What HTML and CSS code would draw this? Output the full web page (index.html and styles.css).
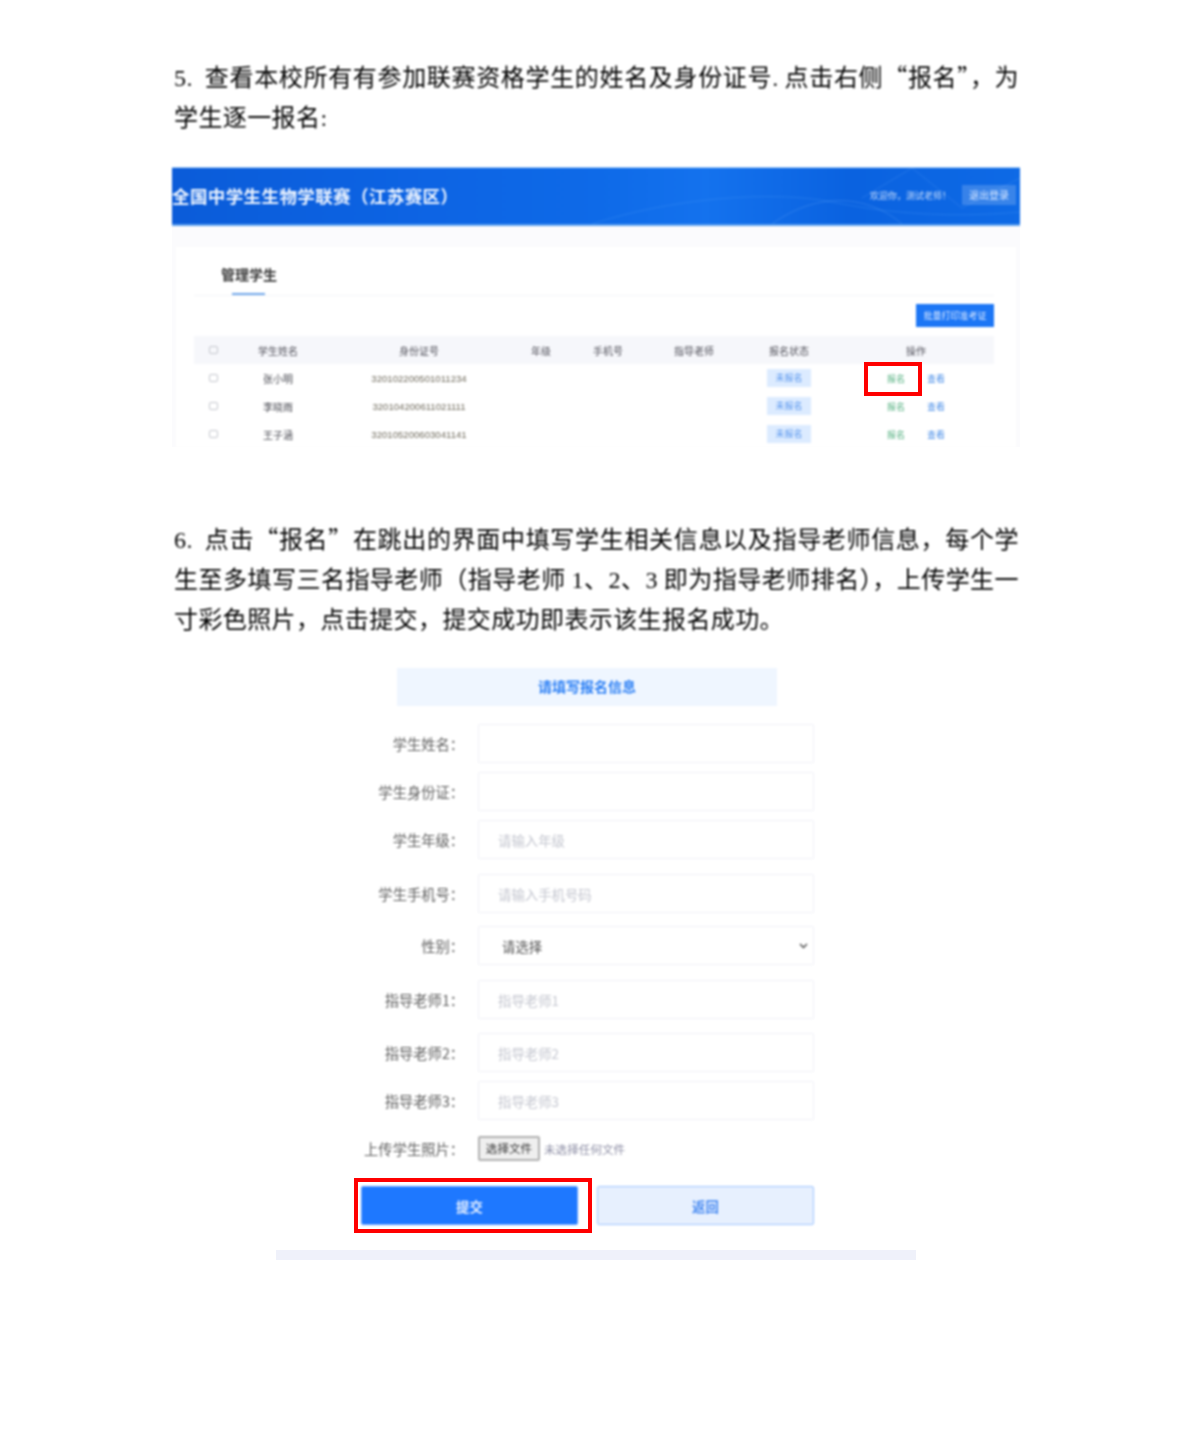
FILE: index.html
```html
<!DOCTYPE html>
<html lang="zh-CN">
<head>
<meta charset="utf-8">
<title>报名说明</title>
<link rel="stylesheet" href="styles.css">
</head>
<body>
<main class="doc">
  <div class="para">
    <span class="line full"><span class="num">5.</span> 查看本校所有有参加联赛资格学生的姓名及身份证号<span class="dot">.</span> 点击右侧“报名”，为</span>
    <span class="line">学生逐一报名<span class="dot">:</span></span>
  </div>

  <section class="shot">
    <header class="shot-head">
      <svg class="waves" viewBox="0 0 848 56" preserveAspectRatio="none" aria-hidden="true">
        <path d="M420 56C500 30 600 22 660 34S780 50 848 44" fill="none" stroke="#4d9bf5" stroke-opacity=".3"/>
        <path d="M600 56C650 20 700 30 730 56" fill="none" stroke="#7ab6fa" stroke-opacity=".25"/>
        <path d="M690 30L740 0L790 40L848 10" fill="none" stroke="#7ab6fa" stroke-opacity=".2"/>
      </svg>
      <h2 class="shot-title">全国中学生生物学联赛（江苏赛区）</h2>
      <div class="shot-user">
        <span class="welcome">欢迎你，测试老师！</span>
        <span class="logout">退出登录</span>
      </div>
    </header>
    <div class="shot-body">
      <div class="card">
        <div class="tabbar">
          <div class="tab">
            <span class="tab-label">管理学生</span>
            <span class="tab-line"></span>
          </div>
        </div>
        <div class="toolbar"><span class="print-btn">批量打印准考证</span></div>
        <div class="trow thead">
          <span class="cell"><i class="check"></i></span>
          <span class="cell">学生姓名</span>
          <span class="cell">身份证号</span>
          <span class="cell">年级</span>
          <span class="cell">手机号</span>
          <span class="cell">指导老师</span>
          <span class="cell">报名状态</span>
          <span class="cell">操作</span>
        </div>
        <div class="trow">
          <span class="cell"><i class="check"></i></span>
          <span class="cell redact">张小明</span>
          <span class="cell redact id">320102200501011234</span>
          <span class="cell"></span><span class="cell"></span><span class="cell"></span>
          <span class="cell"><span class="tag">未报名</span></span>
          <span class="cell actions"><span class="act-green">报名</span><span class="act-blue">查看</span></span>
        </div>
        <div class="trow">
          <span class="cell"><i class="check"></i></span>
          <span class="cell redact">李晓雨</span>
          <span class="cell redact id">320104200611021111</span>
          <span class="cell"></span><span class="cell"></span><span class="cell"></span>
          <span class="cell"><span class="tag">未报名</span></span>
          <span class="cell actions"><span class="act-green">报名</span><span class="act-blue">查看</span></span>
        </div>
        <div class="trow">
          <span class="cell"><i class="check"></i></span>
          <span class="cell redact">王子涵</span>
          <span class="cell redact id">320105200603041141</span>
          <span class="cell"></span><span class="cell"></span><span class="cell"></span>
          <span class="cell"><span class="tag">未报名</span></span>
          <span class="cell actions"><span class="act-green">报名</span><span class="act-blue">查看</span></span>
        </div>
      </div>
    </div>
    <div class="mark mark-signup"></div>
  </section>

  <div class="para para-two">
    <span class="line full"><span class="num">6.</span> 点击“报名”在跳出的界面中填写学生相关信息以及指导老师信息，每个学</span>
    <span class="line full">生至多填写三名指导老师（指导老师 <span class="dot">1</span>、<span class="dot">2</span>、<span class="dot">3</span> 即为指导老师排名），上传学生一</span>
    <span class="line">寸彩色照片，点击提交，提交成功即表示该生报名成功。</span>
  </div>

  <form class="form">
    <div class="form-title">请填写报名信息</div>
    <div class="frow"><label class="flabel">学生姓名：</label><input class="control" type="text"></div>
    <div class="frow"><label class="flabel">学生身份证：</label><input class="control" type="text"></div>
    <div class="frow"><label class="flabel">学生年级：</label><input class="control" type="text" placeholder="请输入年级"></div>
    <div class="frow wide"><label class="flabel">学生手机号：</label><input class="control" type="text" placeholder="请输入手机号码"></div>
    <div class="frow mid"><label class="flabel">性别：</label><select class="control select"><option>请选择</option></select></div>
    <div class="frow wide"><label class="flabel">指导老师1：</label><input class="control" type="text" placeholder="指导老师1"></div>
    <div class="frow mid2"><label class="flabel">指导老师2：</label><input class="control" type="text" placeholder="指导老师2"></div>
    <div class="frow"><label class="flabel">指导老师3：</label><input class="control" type="text" placeholder="指导老师3"></div>
    <div class="frow file-row">
      <label class="flabel">上传学生照片：</label>
      <span class="file-btn">选择文件</span>
      <span class="file-note">未选择任何文件</span>
    </div>
    <div class="form-actions">
      <button class="btn btn-primary" type="button">提交</button>
      <button class="btn btn-plain" type="button">返回</button>
    </div>
  </form>
  <div class="submit-mark-anchor"><div class="mark mark-submit"></div></div>
  <div class="footer-bar"></div>
</main>
</body>
</html>
```

FILE: styles.css
```css
* { box-sizing: border-box; }
html, body { margin: 0; padding: 0; background: #fff; }
body {
  font-family: "Noto Sans CJK SC", "Noto Sans", sans-serif;
  color: #000;
}
.doc { width: 848px; margin-left: 172px; padding-top: 56px; }

.para { font-size: 24px; letter-spacing: .4px; font-weight: 400; filter: blur(.8px); color: #000; }
.para-two { margin-top: 71px; }
.line { display: block; height: 40px; line-height: 40px; white-space: nowrap; padding-left: 2px; }
.line.full { text-align: justify; text-align-last: justify; white-space: normal; padding-right: 1px; }
.num, .dot { font-family: "Liberation Serif", serif; line-height: 1; }
.num { margin-right: 6px; }

/* screenshot 1 */
.shot { position: relative; margin-top: 31px; height: 280px; }
.shot-head {
  position: relative;
  height: 59px;
  display: flex;
  align-items: center;
  justify-content: space-between;
  padding: 0 4px 2px 0;
  border-top: 1px solid #a6cdf7;
  border-bottom: 2px solid #5b9fee;
  background: linear-gradient(90deg, #0b5cd9 0%, #0d64e4 30%, #0e6ae8 50%, #1472ee 63%, #0a62e0 80%, #0e6ae6 100%);
  filter: blur(.8px);
  overflow: hidden;
}
.waves { position: absolute; inset: 0; width: 100%; height: 100%; }
.shot-title { position: relative; margin: 2px 0 0; font-size: 17.5px; line-height: 24px; letter-spacing: .4px; font-weight: 700; color: #eef5ff; white-space: nowrap; }
.shot-user { position: relative; display: flex; align-items: center; gap: 11px; }
.welcome { font-size: 9px; color: #c7dcfb; }
.logout { width: 54px; height: 20px; line-height: 20px; text-align: center; font-size: 10px; color: #d6e6ff; background: rgba(255,255,255,.18); }
.shot-body { height: 221px; padding: 21px 4px 0 4px; background: #fbfbfd; }
.card { height: 200px; padding: 0 22px 0 18px; background: #fff; overflow: hidden; filter: blur(.8px); }
.tabbar { height: 49px; border-bottom: 1px solid #f4f5f8; padding-left: 27px; }
.tab { display: flex; flex-direction: column; align-items: flex-start; padding-top: 18px; }
.tab-label { font-size: 14px; line-height: 18px; font-weight: 700; color: #3a3a3a; }
.tab-line { width: 33px; height: 2px; margin: 10px 0 0 11px; background: #6fa6ea; }
.toolbar { display: flex; justify-content: flex-end; padding-top: 8px; height: 40px; }
.print-btn { width: 78px; height: 23px; line-height: 23px; text-align: center; font-size: 9px; color: #dbe9ff; background: #1c76f5; }
.trow {
  display: grid;
  grid-template-columns: 38px 92px 190px 54px 80px 92px 98px 156px;
  height: 28px;
  font-size: 10px;
  color: #55555e;
}
.thead { background: #f6f7fb; }
.cell { display: flex; align-items: center; justify-content: center; white-space: nowrap; }
.check { display: block; width: 9px; height: 8px; border: 1px solid #c4c6cd; border-radius: 2px; }
.redact { color: #4a4b53; filter: blur(.5px); }
.id { font-family: "Liberation Sans", sans-serif; font-size: 9.6px; color: #6f6a5c; }
.tag { width: 44px; height: 18px; line-height: 18px; text-align: center; font-size: 9px; color: #5c98ee; background: #dcebff; }
.actions { gap: 22px; font-size: 9px; }
.act-green { color: #58b283; }
.act-blue { color: #4b8fe8; }

.mark { position: absolute; border: 4px solid #f00; }
.mark-signup { left: 692px; top: 195px; width: 58px; height: 34px; }

/* form */
.form { margin-top: 30px; filter: blur(.8px); }
.form-title {
  width: 380px; height: 38px; margin: 0 0 18px 225px;
  line-height: 37px; text-align: center;
  font-size: 14px; font-weight: 700; color: #2d80f5;
  background: #eff6ff;
}
.frow { display: flex; align-items: center; gap: 21px; margin-bottom: 9px; }
.frow.wide { margin-top: 15px; }
.frow.mid { margin-top: 13px; }
.frow.mid2 { margin-top: 14px; }
.flabel { width: 285px; text-align: right; font-size: 14.3px; font-feature-settings: "halt"; color: #5f5f5f; white-space: nowrap; }
.control {
  display: block;
  width: 336px; height: 39px;
  padding: 0 19px;
  border: 1px solid #f0f1f7;
  border-radius: 1px;
  background: #fff;
  outline: none;
  font: 13.4px "Noto Sans CJK SC", "Noto Sans", sans-serif;
  color: #555;
}
.control::placeholder { color: #c5c7d0; opacity: 1; }
.select {
  appearance: none;
  padding-left: 23px;
  padding-right: 16px;
  background: #fff url("data:image/svg+xml,%3Csvg xmlns='http://www.w3.org/2000/svg' width='9' height='6'%3E%3Cpath d='M1 1l3.5 3.5L8 1' fill='none' stroke='%23444' stroke-width='1.3'/%3E%3C/svg%3E") no-repeat right 5px center;
}
.frow.file-row { height: 25px; margin-top: 16px; margin-bottom: 0; gap: 0; }
.file-row .flabel { margin-right: 21px; }
.file-btn {
  width: 62px; height: 25px; line-height: 21px; text-align: center;
  font-size: 11.6px; color: #333; white-space: nowrap;
  background: #efefef; border: 2px solid #b0b0b0; border-radius: 2px;
}
.file-note { margin-left: 4px; font-size: 11.6px; color: #8b8ca3; white-space: nowrap; }
.form-actions { display: flex; gap: 19px; margin: 25px 0 0 189px; width: 453px; }
.btn { width: 217px; height: 39px; padding: 0; border-radius: 2px; font: 700 13.4px "Noto Sans CJK SC", "Noto Sans", sans-serif; }
.btn-primary { color: #e6f0ff; background: #1e78ff; border: 1px solid #5fa0ff; }
.btn-plain { color: #4c8df2; background: #e7f0fe; border: 1px solid #a0c6ff; }
.submit-mark-anchor { position: relative; height: 0; }
.mark-submit { left: 182px; top: -47px; width: 238px; height: 55px; }
.footer-bar { width: 640px; height: 10px; margin: 25px 0 0 104px; background: #eff1fa; }
```
